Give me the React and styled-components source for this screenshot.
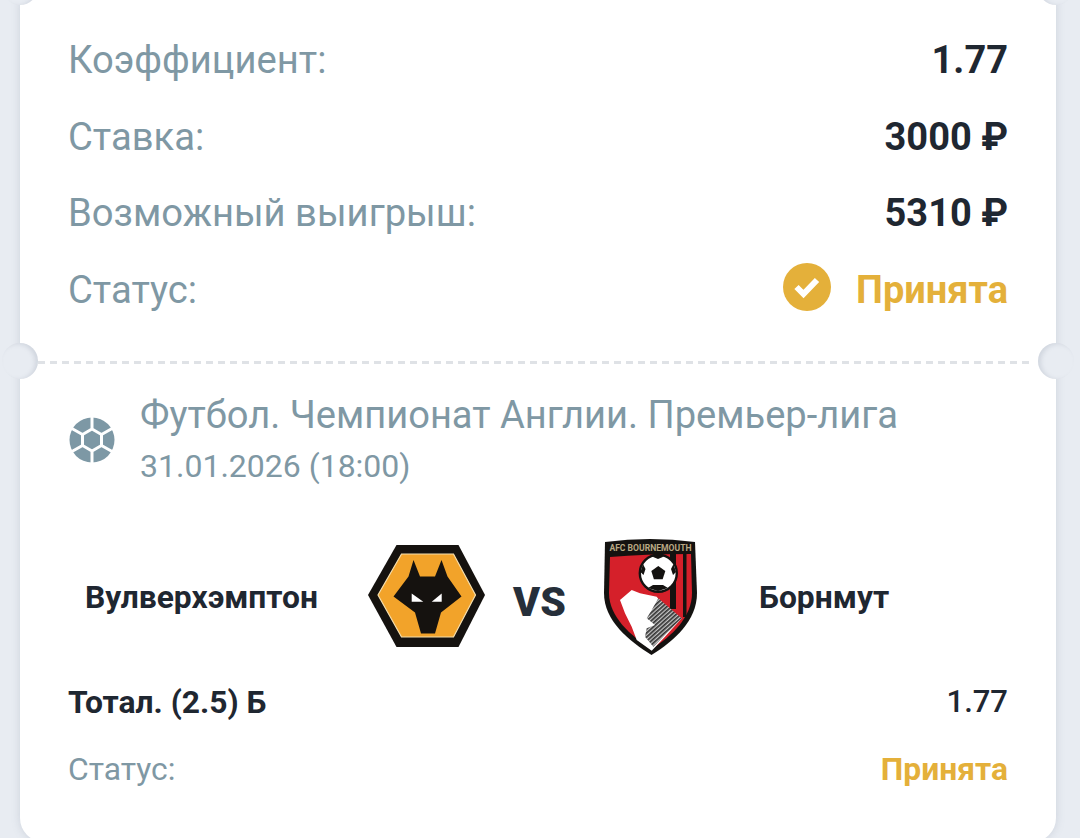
import React from 'react';
import styled, { createGlobalStyle } from 'styled-components';

const GlobalStyle = createGlobalStyle`
  html, body {
    margin: 0;
    height: 838px;
    overflow: hidden;
    background: #e8ecf2;
    font-family: Roboto, "Liberation Sans", sans-serif;
  }
`;

const Card = styled.div`
  position: relative;
  box-sizing: border-box;
  width: 1036px;
  height: 842px;
  margin-left: 20px;
  background: #fff;
  border-radius: 0 0 24px 24px;
  box-shadow: 0 0 8px rgba(120, 130, 150, 0.25);
`;

const Notch = styled.span`
  position: absolute;
  top: ${props => props.top}px;
  ${props => (props.right ? 'right: -18px;' : 'left: -18px;')}
  width: 36px;
  height: 36px;
  border-radius: 50%;
  background: #e8ecf2;
  box-shadow: inset ${props => (props.right ? '3px' : '-3px')} 1px 4px rgba(120, 130, 150, 0.2);
`;

const Summary = styled.section`
  box-sizing: border-box;
  height: 361px;
  padding: 22px 48px 0 49px;
`;

const Row = styled.div`
  display: flex;
  justify-content: space-between;
  align-items: center;
  height: 76.5px;
`;

const Label = styled.span`
  font-size: 38.2px;
  margin-left: -1px;
  color: #7f98a4;
`;

const Value = styled.span`
  font-size: 38px;
  font-weight: 700;
  color: #1f2731;
`;

const Accepted = styled.span`
  display: flex;
  align-items: center;
  gap: 24px;
  font-size: 38px;
  font-weight: 700;
  color: #e4b03a;
`;

const CheckSvg = styled.svg`
  margin-bottom: 5px;
`;

const Dashes = styled.div`
  height: 3px;
  margin: 0 22px 0 18px;
  background: repeating-linear-gradient(90deg, #dfe2e6 0 7px, transparent 7px 12px);
`;

const Details = styled.section`
  padding: 31px 48px 0 49px;
`;

const League = styled.div`
  display: flex;
  align-items: center;
  gap: 25px;
`;

const LeagueText = styled.div`
  display: flex;
  flex-direction: column;
  gap: 12px;
`;

const LeagueName = styled.span`
  font-size: 38.1px;
  line-height: 41px;
  color: #7f98a4;
`;

const LeagueDate = styled.span`
  font-size: 32px;
  line-height: 37px;
  color: #7f98a4;
`;

const Teams = styled.div`
  display: flex;
  align-items: center;
  height: 120px;
  margin-top: 51px;
`;

const TeamName = styled.span`
  box-sizing: border-box;
  font-size: 31.8px;
  font-weight: 700;
  color: #1f2731;
  width: ${props => props.width}px;
  padding-left: ${props => props.indent}px;
  padding-top: 2px;
`;

const Versus = styled.span`
  width: 119px;
  padding-right: 10px;
  padding-top: 12px;
  box-sizing: border-box;
  text-align: center;
  font-size: 41px;
  font-weight: 900;
  color: #262f3a;
`;

const BetRow = styled.div`
  display: flex;
  justify-content: space-between;
  align-items: center;
  margin-top: ${props => props.gap}px;
  font-size: 31.8px;
  line-height: 36px;
`;

const BetName = styled.span`
  font-weight: 700;
  margin-left: -1px;
  color: #1f2731;
`;

const BetOdd = styled.span`
  font-weight: 500;
  font-size: 31px;
  color: #1f2731;
`;

const StatusLabel = styled.span`
  margin-left: -1px;
  color: #7f98a4;
`;

const StatusValue = styled.span`
  font-weight: 700;
  color: #e4b03a;
`;

const CheckIcon = () => (
  <CheckSvg width="50" height="50" viewBox="0 0 50 50">
    <circle cx="25" cy="25" r="24" fill="#e4b03a" />
    <path d="M14.5 25l7 7L35 18" fill="none" stroke="#fff" strokeWidth="6" />
  </CheckSvg>
);

const BallIcon = () => (
  <svg width="46" height="46" viewBox="0 0 46 46">
    <circle cx="23" cy="23" r="22.5" fill="#7d98a5" />
    <path
      d="M23 12l9.5 5.5v11L23 34l-9.5-5.5v-11z M23 12V0 M32.5 17.5L44 11 M32.5 28.5L44 35 M23 34v12 M13.5 28.5L2 35 M13.5 17.5L2 11"
      fill="none"
      stroke="#fff"
      strokeWidth="3"
    />
  </svg>
);

const WolvesLogo = () => (
  <svg width="117" height="102" viewBox="0 0 117 102">
    <path d="M28.5 0H90.5L117 50 90.5 102H28.5L0 50z" fill="#15120f" />
    <path d="M33.5 9H85.5L107.5 50 85.5 92H33.5L10 50z" fill="#f2a32a" stroke="#f6dfae" strokeWidth="1.2" />
    <path
      d="M45.5 15L52 31.5H67L73.5 15 79.5 31.5 93.5 51.5 73 67.5 67 88.5H53L47 67.5 25.5 51.5 40.5 31.5z"
      fill="#15120f"
    />
    <path d="M43.7 48.5L55.3 56.7H43.7zM73.7 48.5L63.7 56.7H73.7z" fill="#fff" />
  </svg>
);

const BournemouthLogo = () => (
  <svg width="93" height="119" viewBox="0 0 93 119">
    <defs>
      <pattern id="comb" width="3" height="3" patternUnits="userSpaceOnUse" patternTransform="rotate(48)">
        <rect width="3" height="3" fill="#c8c8c8" />
        <rect width="1.7" height="3" fill="#333" />
      </pattern>
    </defs>
    <path d="M1 5Q46 -1 91 5L93 56C93 84 70 104 47.5 118 25 104 0 84 0 56z" fill="#141210" />
    <path d="M6 20Q40 17 87 17L88 56C88 80 68 99 47.5 112 27 99 5 80 5 56z" fill="#d5202a" />
    <path d="M66 17h6V72h-6zM79 17h3.5V80H79z" fill="#141210" />
    <path
      d="M16 63L27.7 53 36 56.3 52.7 59.7 62.7 73 77.7 81.3 61 99.7 47.7 113.7 32.7 103 27.7 89.7 21 76.3z"
      fill="#fff"
    />
    <path d="M54.3 61.3L77.7 81.3 49.3 109.7 41 99.7 42.7 91.3 51 88 42.7 81.3 47.7 73z" fill="url(#comb)" />
    <circle cx="54.3" cy="36.3" r="18.5" fill="#fff" stroke="#141210" strokeWidth="2.4" />
    <path d="M54.3 29l7 5-2.6 8.2h-8.8l-2.6-8.2z" fill="#141210" />
    <path d="M48 19.5l6-1.5 6 1.5-6 2.5zM69.5 27l2.5 8-3 3-2-6zM39 27l-2.5 8 3 3 2-6zM44 51l10 3 10-3-5-3h-10z" fill="#141210" />
    <text
      x="46.5"
      y="13.5"
      textAnchor="middle"
      fontFamily="Roboto, sans-serif"
      fontWeight="700"
      fontSize="8.6"
      fill="#b9a883"
    >
      AFC BOURNEMOUTH
    </text>
  </svg>
);

const summaryRows = [
  { label: 'Коэффициент:', value: '1.77' },
  { label: 'Ставка:', value: '3000 ₽' },
  { label: 'Возможный выигрыш:', value: '5310 ₽' },
];

export default function App() {
  return (
    <>
      <GlobalStyle />
      <Card>
        <Notch top={-31} />
        <Notch top={-31} right />
        <Notch top={343} />
        <Notch top={343} right />
        <Summary>
          {summaryRows.map(row => (
            <Row key={row.label}>
              <Label>{row.label}</Label>
              <Value>{row.value}</Value>
            </Row>
          ))}
          <Row>
            <Label>Статус:</Label>
            <Accepted>
              <CheckIcon />
              Принята
            </Accepted>
          </Row>
        </Summary>
        <Dashes />
        <Details>
          <League>
            <BallIcon />
            <LeagueText>
              <LeagueName>Футбол. Чемпионат Англии. Премьер-лига</LeagueName>
              <LeagueDate>31.01.2026 (18:00)</LeagueDate>
            </LeagueText>
          </League>
          <Teams>
            <TeamName width={299} indent={16}>Вулверхэмптон</TeamName>
            <WolvesLogo />
            <Versus>VS</Versus>
            <BournemouthLogo />
            <TeamName width={200} indent={62}>Борнмут</TeamName>
          </Teams>
          <BetRow gap={28}>
            <BetName>Тотал. (2.5) Б</BetName>
            <BetOdd>1.77</BetOdd>
          </BetRow>
          <BetRow gap={31}>
            <StatusLabel>Статус:</StatusLabel>
            <StatusValue>Принята</StatusValue>
          </BetRow>
        </Details>
      </Card>
    </>
  );
}
